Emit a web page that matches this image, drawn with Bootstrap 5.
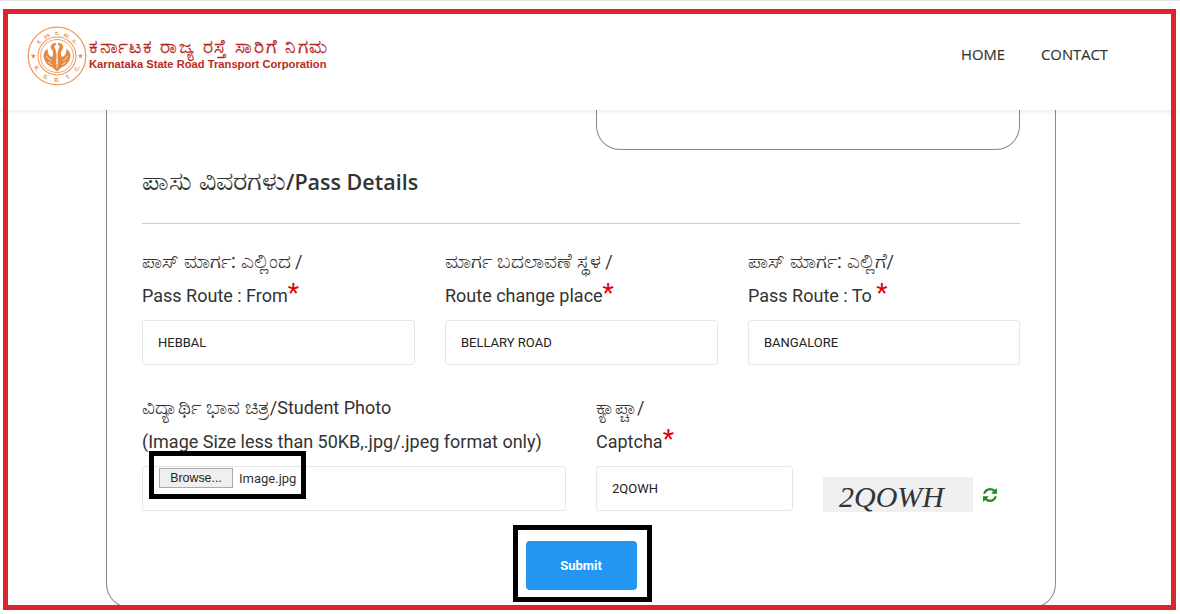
<!DOCTYPE html>
<html lang="kn">
<head>
<meta charset="utf-8">
<title>KSRTC Pass Details</title>
<link href="https://cdn.jsdelivr.net/npm/bootstrap@5.3.0/dist/css/bootstrap.min.css" rel="stylesheet">
<style>
html,body{height:100%;margin:0;overflow:hidden;background:#fff;}
body{font-family:Roboto,"Noto Sans",sans-serif;color:#333;}
.page-shell{height:614px;position:relative;overflow:hidden;}
.top-bar{height:110px;background:#fff;border-top:1px solid #e2e2e2;box-shadow:0 1px 6px rgba(0,0,0,.1);position:relative;z-index:2;padding:0 72px 0 27px;}
.brand-block{margin-top:-2px;}
.brand-kn{font-size:18.500px;font-weight:400;color:#b5271f;line-height:19px;letter-spacing:1.700px;white-space:nowrap;-webkit-text-stroke:.3px #b5271f;}
.brand-en{font-family:"Liberation Sans",sans-serif;font-size:11.2px;font-weight:700;color:#bb2a22;line-height:14px;white-space:nowrap;}
.logo-mark{margin-right:2px;}
.top-nav{gap:36px;margin-top:-2px;}
.top-link{font-family:"Open Sans",sans-serif;font-size:14.800px;font-weight:500;color:#333;text-decoration:none;-webkit-text-stroke:.15px #333;}
.form-sheet{width:950px;height:498px;margin:0 0 0 106px;border:1px solid #8a8a8a;border-top:0;border-radius:0 0 24px 24px;padding:0 35px;}
.old-box{width:424px;height:40px;margin-left:454px;border:1px solid #8a8a8a;border-top:0;border-radius:0 0 24px 24px;}
.sheet-title{font-family:"Open Sans",sans-serif;font-size:21.500px;font-weight:600;color:#333;margin:15px 0 28px;height:30px;line-height:30px;white-space:nowrap;}
.sheet-title .kn-big{font-size:27px;font-weight:400;-webkit-text-stroke:.15px #333;}
.sheet-rule{border-top:1px solid #ccc;height:0;}
.field-row{display:flex;gap:30px;}
.label-line{font-size:18px;line-height:34px;color:#333;height:34px;white-space:nowrap;}
.kn-text{font-size:19.700px;-webkit-text-stroke:.1px #333;}
.req{color:#e00000;font-size:26px;line-height:1;}
.soft-input{height:45px;margin-top:7px;border:1px solid #e6e6e6;border-radius:3px;background:#fff;padding:0 15px;font-size:13px;color:#222;display:flex;align-items:center;}
.file-input{align-items:flex-start;gap:6px;padding:1px 16px 0;}
.browse-btn{font-family:"Liberation Sans",sans-serif;font-size:12.400px;height:20px;width:74px;background:#efefef;border:1px solid #aaa;color:#222;display:flex;align-items:center;justify-content:center;}
.file-name{font-size:13px;color:#333;line-height:21px;}
.captcha-wrap{margin-bottom:-1px;}
.captcha-pic{width:150px;height:35px;background:#f0f0f0;font-family:"Liberation Serif",serif;font-style:italic;font-size:30px;color:#333;line-height:39px;padding-left:16px;overflow:hidden;}
.reload-mark{margin:0 0 10px 10px;}
.send-btn{width:111px;height:49px;background:#2196f3;color:#fff;font-size:13px;font-weight:700;border:0;border-radius:4px;}
.frame-red{position:absolute;left:3px;top:9px;width:1173px;height:601px;border:5px solid #dc2430;z-index:5;pointer-events:none;}
.frame-black{position:absolute;border:5px solid #000;z-index:4;pointer-events:none;}
.fb-file{left:149px;top:451px;width:157px;height:48px;}
.fb-send{left:513px;top:525px;width:139px;height:77px;}
</style>
</head>
<body>
<div class="page-shell">
  <header class="top-bar d-flex align-items-center justify-content-between">
    <div class="d-flex align-items-center">
      <svg class="logo-mark" width="60" height="60" viewBox="0 0 60 60" aria-hidden="true">
        <g fill="none" stroke="#ee9a5c">
          <circle cx="30" cy="30" r="28.800" stroke-width="1.300"/>
          <circle cx="30" cy="30" r="19" stroke-width="1.100"/>
          <circle cx="30" cy="30" r="16.500" stroke-width=".9"/>
        </g>
        <g fill="#e58a45">
          <path d="M29.500 42C24 42 18 38 16.800 31.500 16 27 18 24 21 23 20 27 22 30 25 31 27 28 26 25 24 22.500 23 20 25 17 28 17 30 17 29.500 19 27.300 20 28 22.500 29.500 25 29.500 29z"/>
          <path d="M30.500 42C36 42 42 38 43.200 31.500 44 27 42 24 39 23 40 27 38 30 35 31 33 28 34 25 36 22.500 37 20 35 17 32 17 30 17 30.500 19 32.700 20 32 22.500 30.500 25 30.500 29z"/>
          <path d="M25.500 41.500 30 45.500 34.500 41.500 33 38H27z"/>
        </g>
        <g stroke="#fff" stroke-width=".7" fill="none">
          <path d="M19 30l5 5M21 36l4 3M41 30l-5 5M39 36l-4 3M30 33v9"/>
        </g>
        <g fill="#e58a45" font-family="Liberation Sans,sans-serif" font-size="5.500" font-weight="700" text-anchor="middle">
          <text transform="rotate(-52 30 30)" x="30" y="9">ಕ.</text>
          <text transform="rotate(-26 30 30)" x="30" y="9">ರಾ.</text>
          <text x="30" y="9">ರ.</text>
          <text transform="rotate(26 30 30)" x="30" y="9">ಸಾ.</text>
          <text transform="rotate(52 30 30)" x="30" y="9">ನಿ.</text>
          <text transform="rotate(58 30 30)" x="30" y="55.500">K.</text>
          <text transform="rotate(28 30 30)" x="30" y="55.500">S.</text>
          <text x="30" y="55.500">R.</text>
          <text transform="rotate(-28 30 30)" x="30" y="55.500">T.</text>
          <text transform="rotate(-58 30 30)" x="30" y="55.500">C.</text>
          <text x="6.500" y="32" font-size="6">★</text>
          <text x="53.500" y="32" font-size="6">★</text>
        </g>
      </svg>
      <div class="brand-block">
        <div class="brand-kn">ಕರ್ನಾಟಕ ರಾಜ್ಯ ರಸ್ತೆ ಸಾರಿಗೆ ನಿಗಮ</div>
        <div class="brand-en">Karnataka State Road Transport Corporation</div>
      </div>
    </div>
    <nav class="d-flex top-nav">
      <a class="top-link" href="#">HOME</a>
      <a class="top-link" href="#">CONTACT</a>
    </nav>
  </header>
  <main class="form-sheet">
    <div class="old-box"></div>
    <h2 class="sheet-title"><span class="kn-big">ಪಾಸು ವಿವರಗಳು</span>/Pass Details</h2>
    <div class="sheet-rule"></div>
    <div class="field-row" style="margin-top:21px">
      <div style="width:273px">
        <div class="label-line"><span class="kn-text">ಪಾಸ್ ಮಾರ್ಗ: ಎಲ್ಲಿಂದ</span> /</div>
        <div class="label-line">Pass Route : From<span class="req">*</span></div>
        <div class="soft-input">HEBBAL</div>
      </div>
      <div style="width:273px">
        <div class="label-line"><span class="kn-text">ಮಾರ್ಗ ಬದಲಾವಣೆ ಸ್ಥಳ</span> /</div>
        <div class="label-line">Route change place<span class="req">*</span></div>
        <div class="soft-input">BELLARY ROAD</div>
      </div>
      <div style="width:272px">
        <div class="label-line"><span class="kn-text">ಪಾಸ್ ಮಾರ್ಗ: ಎಲ್ಲಿಗೆ</span>/</div>
        <div class="label-line">Pass Route : To <span class="req">*</span></div>
        <div class="soft-input">BANGALORE</div>
      </div>
    </div>
    <div class="field-row" style="margin-top:26px">
      <div style="width:424px">
        <div class="label-line"><span class="kn-text">ವಿದ್ಯಾರ್ಥಿ ಭಾವ ಚಿತ್ರ</span>/Student Photo</div>
        <div class="label-line">(Image Size less than 50KB,.jpg/.jpeg format only)</div>
        <div class="soft-input file-input"><span class="browse-btn">Browse...</span><span class="file-name">Image.jpg</span></div>
      </div>
      <div style="width:197px">
        <div class="label-line"><span class="kn-text">ಕ್ಯಾಪ್ಚಾ</span>/</div>
        <div class="label-line">Captcha<span class="req">*</span></div>
        <div class="soft-input">2QOWH</div>
      </div>
      <div class="d-flex align-items-end captcha-wrap">
        <div class="captcha-pic">2QOWH</div>
        <svg class="reload-mark" width="14" height="14" viewBox="128 128 1536 1536" aria-hidden="true"><path fill="#228b22" d="M1639 1056q0 5-1 7-64 268-268 434.500t-478 166.500q-146 0-282.500-55t-243.500-157l-129 129q-19 19-45 19t-45-19-19-45v-448q0-26 19-45t45-19h448q26 0 45 19t19 45-19 45l-137 137q71 66 161 102t187 36q134 0 250-65t186-179q11-17 53-117 8-23 30-23h192q13 0 22.500 9.500t9.500 22.500zm25-800v448q0 26-19 45t-45 19h-448q-26 0-45-19t-19-45 19-45l138-138q-148-137-349-137-134 0-250 65t-186 179q-11 17-53 117-8 23-30 23h-199q-13 0-22.500-9.500t-9.500-22.500v-7q65-268 270-434.500t480-166.500q146 0 284 55.500t245 156.500l130-129q19-19 45-19t45 19 19 45z"/></svg>
      </div>
    </div>
    <div class="d-flex justify-content-center" style="margin-top:30px">
      <button class="send-btn" type="button">Submit</button>
    </div>
  </main>
  <div class="frame-red"></div>
  <div class="frame-black fb-file"></div>
  <div class="frame-black fb-send"></div>
</div>
<script src="https://cdn.jsdelivr.net/npm/bootstrap@5.3.0/dist/js/bootstrap.bundle.min.js"></script>
</body>
</html>
